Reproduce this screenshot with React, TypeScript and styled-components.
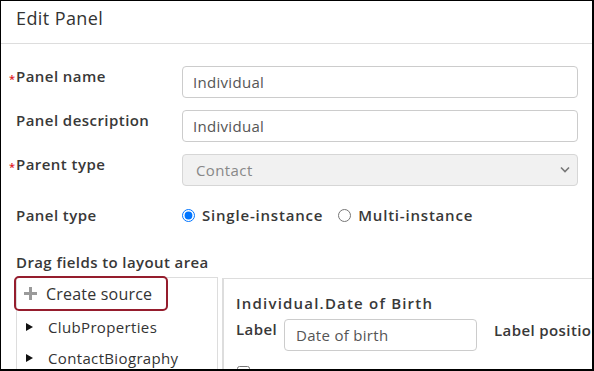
import styled, { createGlobalStyle } from "styled-components";

const GlobalStyle = createGlobalStyle`
  html, body {
    margin: 0;
    padding: 0;
    background: #fff;
  }
  body {
    font-family: "Open Sans", "Liberation Sans", sans-serif;
    color: #333;
  }
  * {
    box-sizing: border-box;
  }
`;

const Frame = styled.div`
  width: 594px;
  height: 371px;
  border: 1px solid #000;
  border-right-width: 2px;
  border-bottom-width: 2px;
  overflow: hidden;
  display: flex;
  flex-direction: column;
`;

const Header = styled.header`
  height: 43px;
  flex-shrink: 0;
  padding: 6px 15px 0;
  border-bottom: 1px solid #ddd;
  font-size: 18px;
  letter-spacing: 0.4px;
  line-height: 22px;
  color: #333;
`;

const Body = styled.div`
  padding: 22px 14px 0 15px;
`;

const Form = styled.div`
  display: grid;
  grid-template-columns: 166px 1fr;
  row-gap: 12px;
  align-items: start;
`;

const Label = styled.label<{ $required?: boolean }>`
  position: relative;
  font-size: 15px;
  font-weight: 600;
  letter-spacing: 0.45px;
  line-height: 20px;
  color: #383838;
  &::before {
    content: ${(p) => (p.$required ? '"*"' : "none")};
    position: absolute;
    left: -7px;
    top: 3px;
    color: #e0201b;
    font-size: 11px;
    letter-spacing: 0;
  }
`;

const TextInput = styled.input`
  width: 100%;
  height: 32px;
  padding: 0 10px;
  border: 1px solid #ccc;
  border-radius: 4px;
  font-family: inherit;
  font-size: 15px;
  letter-spacing: 0.3px;
  color: #555;
  background: #fff;
  outline: none;
`;

const SelectWrap = styled.div`
  position: relative;
`;

const Select = styled.select`
  width: 100%;
  height: 32px;
  padding: 0 13px;
  border: 1px solid #d6d6d6;
  border-radius: 4px;
  appearance: none;
  font-family: inherit;
  font-size: 15px;
  letter-spacing: 0.4px;
  color: #888;
  background: #f1f1f1;
  opacity: 1;
`;

const Chevron = styled.svg`
  position: absolute;
  right: 8px;
  top: 12px;
  pointer-events: none;
`;

const RadioRow = styled.div`
  display: flex;
  align-items: center;
  height: 32px;
  margin-top: 13px;
`;

const RadioLabel = styled.label`
  display: flex;
  align-items: center;
  gap: 7px;
  margin-right: 15px;
  font-size: 15px;
  font-weight: 600;
  letter-spacing: 0.8px;
  color: #383838;
  input {
    margin: 0;
    width: 13px;
    height: 13px;
  }
`;

const SectionTitle = styled.div`
  margin-top: 21px;
  font-size: 15px;
  font-weight: 600;
  letter-spacing: 0.4px;
  line-height: 20px;
  color: #383838;
`;

const Split = styled.div`
  display: flex;
  gap: 4px;
  margin-top: 5px;
  height: 120px;
`;

const Tree = styled.div`
  width: 202px;
  flex-shrink: 0;
  border: 1px solid #ddd;
  border-bottom: none;
`;

const CreateSource = styled.div`
  display: flex;
  align-items: center;
  gap: 9px;
  width: 154px;
  height: 35px;
  margin: -2px 0 0 -3px;
  padding-left: 8px;
  border: 2px solid #951d2d;
  border-radius: 5px;
  font-size: 16px;
  letter-spacing: 0.2px;
  color: #333;
`;

const TreeItem = styled.div`
  display: flex;
  align-items: center;
  height: 31px;
  padding-left: 8px;
  font-size: 15px;
  letter-spacing: 0.35px;
  color: #333;
`;

const Caret = styled.svg`
  margin: 0 15px 0 1px;
  flex-shrink: 0;
`;

const Canvas = styled.div`
  flex: 1;
  border-top: 1px solid #ddd;
  border-left: 2px solid #ddd;
  margin-top: 1px;
  padding: 14px 0 0 12px;
  white-space: nowrap;
`;

const FieldTitle = styled.div`
  font-size: 15px;
  font-weight: 600;
  letter-spacing: 1.2px;
  line-height: 20px;
  color: #383838;
`;

const FieldRow = styled.div`
  display: flex;
  align-items: flex-start;
  margin-top: 6px;
`;

const FieldLabel = styled.span`
  width: 48px;
  flex-shrink: 0;
  font-size: 15px;
  font-weight: 600;
  letter-spacing: 0.4px;
  line-height: 20px;
  color: #383838;
`;

const SmallInput = styled(TextInput)`
  width: 193px;
  flex-shrink: 0;
  padding: 0 11px;
`;

const PositionLabel = styled(FieldLabel)`
  width: auto;
  margin-left: 17px;
  margin-top: 1px;
`;

const CheckRow = styled.div`
  margin-top: 11px;
  input {
    margin: 0 0 0 1px;
    width: 13px;
    height: 13px;
  }
`;

function PlusIcon() {
  return (
    <svg width="13" height="13" viewBox="0 0 13 13">
      <rect x="5" y="0" width="3" height="13" fill="#9a9a9a" />
      <rect x="0" y="5" width="13" height="3" fill="#9a9a9a" />
    </svg>
  );
}

function TriangleRight() {
  return (
    <Caret width="7" height="8" viewBox="0 0 7 8">
      <polygon points="0,0 7,4 0,8" fill="#111" />
    </Caret>
  );
}

export default function App() {
  return (
    <>
      <GlobalStyle />
      <Frame>
        <Header>Edit Panel</Header>
        <Body>
          <Form>
            <Label $required>Panel name</Label>
            <TextInput defaultValue="Individual" readOnly />
            <Label>Panel description</Label>
            <TextInput defaultValue="Individual" readOnly />
            <Label $required>Parent type</Label>
            <SelectWrap>
              <Select disabled defaultValue="Contact">
                <option>Contact</option>
              </Select>
              <Chevron width="10" height="7" viewBox="0 0 10 7">
                <path d="M1 1.5 L5 5.5 L9 1.5" fill="none" stroke="#777" strokeWidth="1.6" />
              </Chevron>
            </SelectWrap>
          </Form>
          <Form>
            <Label as="div" style={{ marginTop: 19 }}>
              Panel type
            </Label>
            <RadioRow>
              <RadioLabel>
                <input type="radio" name="ptype" defaultChecked />
                Single-instance
              </RadioLabel>
              <RadioLabel>
                <input type="radio" name="ptype" />
                Multi-instance
              </RadioLabel>
            </RadioRow>
          </Form>
          <SectionTitle>Drag fields to layout area</SectionTitle>
          <Split>
            <Tree>
              <CreateSource>
                <PlusIcon />
                Create source
              </CreateSource>
              <TreeItem>
                <TriangleRight />
                ClubProperties
              </TreeItem>
              <TreeItem>
                <TriangleRight />
                ContactBiography
              </TreeItem>
            </Tree>
            <Canvas>
              <FieldTitle>Individual.Date of Birth</FieldTitle>
              <FieldRow>
                <FieldLabel>Label</FieldLabel>
                <SmallInput defaultValue="Date of birth" readOnly />
                <PositionLabel>Label position</PositionLabel>
              </FieldRow>
              <CheckRow>
                <input type="checkbox" />
              </CheckRow>
            </Canvas>
          </Split>
        </Body>
      </Frame>
    </>
  );
}
